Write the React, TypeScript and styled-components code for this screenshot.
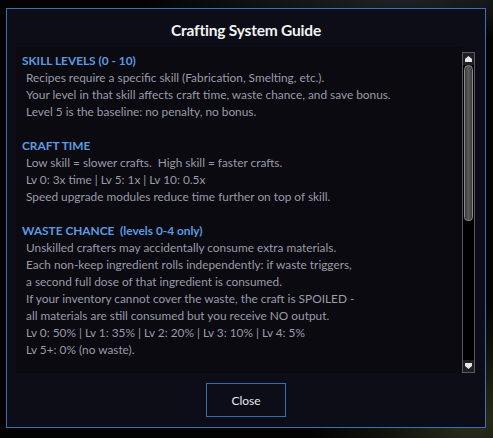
import React from "react";
import styled, { createGlobalStyle } from "styled-components";

const Global = createGlobalStyle`
  html, body { margin: 0; padding: 0; }
  body {
    width: 493px;
    height: 438px;
    overflow: hidden;
    background:
      radial-gradient(ellipse 160px 120px at 470px 420px, #2a2e1a 0%, rgba(30,32,18,0.6) 50%, rgba(0,0,0,0) 100%),
      radial-gradient(ellipse 260px 40px at 400px 0px, #1e2226 0%, rgba(0,0,0,0) 100%),
      #030304;
    font-family: Lato, "Open Sans", sans-serif;
  }
  #root { padding: 8px 0 0 6px; }
`;

const Panel = styled.div`
  box-sizing: border-box;
  width: 480px;
  height: 420px;
  border: 1px solid #3c6fb4;
  background: #0c0d16;
  display: flex;
  flex-direction: column;
`;

const Title = styled.div`
  box-sizing: border-box;
  height: 38px;
  display: flex;
  align-items: center;
  justify-content: center;
  padding-top: 4px;
  color: #f2f2f2;
  font-weight: 700;
  font-size: 15.5px;
  letter-spacing: -0.2px;
`;

const Body = styled.div`
  display: flex;
  margin: 0 10px 0 9px;
  height: 326px;
`;

const Scroll = styled.div`
  flex: 1;
  overflow: hidden;
  background: #0a0a10;
  padding: 5px 0 0 6px;
`;

const Section = styled.div`
  margin-bottom: 17px;
`;

const Heading = styled.div`
  color: #5c9be0;
  font-weight: 700;
  font-size: 11.85px;
  line-height: 17px;
  white-space: pre;
`;

const Line = styled.div`
  color: #9a9aaa;
  font-size: 11.85px;
  line-height: 17px;
  padding-left: 4px;
  white-space: pre;
`;

const Bar = styled.div`
  box-sizing: border-box;
  width: 13px;
  margin-top: 5px;
  border: 1px solid #5a5a5e;
  background: #000;
  display: flex;
  flex-direction: column;
  align-items: center;
`;

const ArrowBtn = styled.div`
  width: 11px;
  height: 12px;
  display: flex;
  align-items: center;
  justify-content: center;
  background: #1e1e22;
`;

const Thumb = styled.div`
  box-sizing: border-box;
  width: 9px;
  height: 156px;
  border-radius: 5px 5px 4px 4px;
  border: 1px solid #8a8a8a;
  background: linear-gradient(90deg, #3a3a3a, #5a5a5a 50%, #3a3a3a);
`;

const Track = styled.div`
  flex: 1;
`;

const Footer = styled.div`
  flex: 1;
  display: flex;
  align-items: flex-start;
  justify-content: center;
  padding-top: 10px;
`;

const CloseButton = styled.button`
  box-sizing: border-box;
  width: 80px;
  height: 34px;
  border: 1px solid #3a6ab0;
  background: #0c0d16;
  color: #e8e8e8;
  font-family: Lato, "Open Sans", sans-serif;
  font-size: 12px;
  cursor: pointer;
`;

const Arrow = ({ down }: { down?: boolean }) => (
  <svg width="7" height="6" viewBox="0 0 7 6" style={{ transform: down ? "rotate(180deg)" : undefined }}>
    <path d="M3.5 0 L7 3 L7 6 L0 6 L0 3 Z" fill="#e6e6e6" />
  </svg>
);

const sections: { title: string; lines: string[] }[] = [
  {
    title: "SKILL LEVELS (0 - 10)",
    lines: [
      "Recipes require a specific skill (Fabrication, Smelting, etc.).",
      "Your level in that skill affects craft time, waste chance, and save bonus.",
      "Level 5 is the baseline: no penalty, no bonus.",
    ],
  },
  {
    title: "CRAFT TIME",
    lines: [
      "Low skill = slower crafts.  High skill = faster crafts.",
      "Lv 0: 3x time | Lv 5: 1x | Lv 10: 0.5x",
      "Speed upgrade modules reduce time further on top of skill.",
    ],
  },
  {
    title: "WASTE CHANCE  (levels 0-4 only)",
    lines: [
      "Unskilled crafters may accidentally consume extra materials.",
      "Each non-keep ingredient rolls independently: if waste triggers,",
      "a second full dose of that ingredient is consumed.",
      "If your inventory cannot cover the waste, the craft is SPOILED -",
      "all materials are still consumed but you receive NO output.",
      "Lv 0: 50% | Lv 1: 35% | Lv 2: 20% | Lv 3: 10% | Lv 4: 5%",
      "Lv 5+: 0% (no waste).",
    ],
  },
];

export default function App() {
  return (
    <>
      <Global />
      <Panel>
        <Title>Crafting System Guide</Title>
        <Body>
          <Scroll>
            {sections.map((s) => (
              <Section key={s.title}>
                <Heading>{s.title}</Heading>
                {s.lines.map((l, i) => (
                  <Line key={i}>{l}</Line>
                ))}
              </Section>
            ))}
          </Scroll>
          <Bar>
            <ArrowBtn>
              <Arrow />
            </ArrowBtn>
            <Thumb />
            <Track />
            <ArrowBtn>
              <Arrow down />
            </ArrowBtn>
          </Bar>
        </Body>
        <Footer>
          <CloseButton>Close</CloseButton>
        </Footer>
      </Panel>
    </>
  );
}
